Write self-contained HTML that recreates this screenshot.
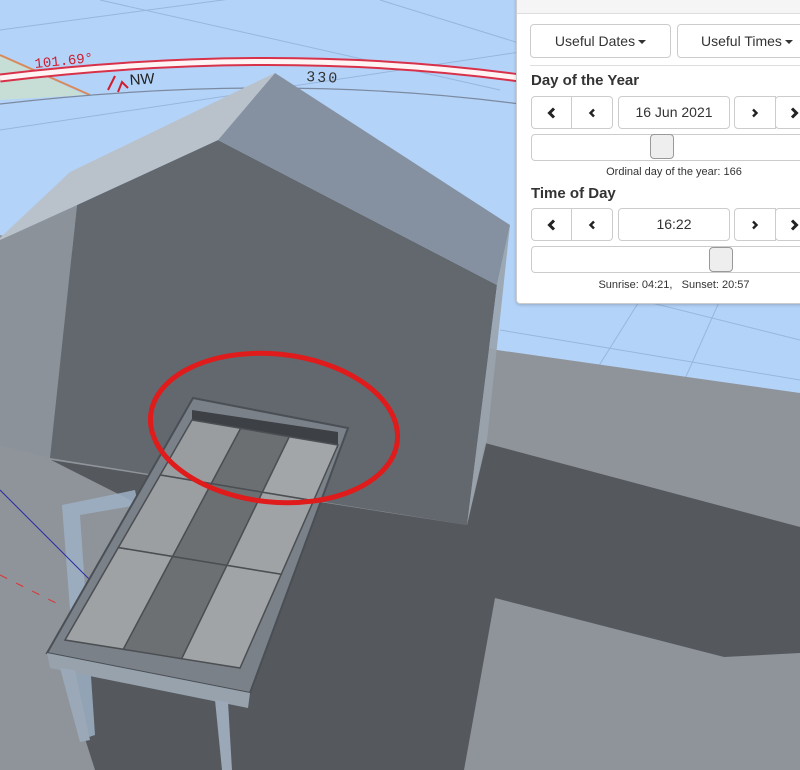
<!DOCTYPE html>
<html><head><meta charset="utf-8"><style>
body{margin:0;width:800px;height:770px;overflow:hidden;position:relative;font-family:"Liberation Sans",sans-serif;}
svg{position:absolute;left:0;top:0}
#p{position:absolute;left:516px;top:-20px;width:300px;height:322px;background:#fff;border:1px solid #ccc;border-radius:4px;box-shadow:0 1px 3px rgba(0,0,0,.2)}
#p .hd{height:33px;background:#f5f5f5;border-bottom:1px solid #ddd;font-size:12px;color:#333;padding:8px 14px 0;box-sizing:border-box;}
.b{position:absolute;border:1px solid #ccc;border-radius:4px;background:#fff;box-sizing:border-box;font-size:14px;color:#333;text-align:center;}
.b svg{position:static;vertical-align:middle}
.t{position:absolute;font-size:15px;font-weight:bold;color:#333}
.s{position:absolute;font-size:11px;color:#333;text-align:center;width:290px}
.car{display:inline-block;border-top:4px solid #333;border-left:4px solid transparent;border-right:4px solid transparent;vertical-align:middle;margin-left:3px}
.th{position:absolute;width:24px;height:25px;border:1px solid #999;border-radius:4px;background:#eee;box-sizing:border-box}
</style></head><body>
<svg width="800" height="770" viewBox="0 0 800 770">
<rect width="800" height="770" fill="#b4d3f8"/>
<g stroke="#8fb0d8" stroke-width="1" opacity=".8">
<line x1="0" y1="30" x2="520" y2="-40"/><line x1="0" y1="130" x2="800" y2="10"/><line x1="100" y1="0" x2="500" y2="90"/><line x1="380" y1="0" x2="800" y2="130"/><line x1="600" y1="290" x2="800" y2="340"/><line x1="500" y1="330" x2="800" y2="380"/><line x1="640" y1="300" x2="590" y2="380"/><line x1="720" y1="300" x2="680" y2="390"/>
</g>
<polygon points="0,100 85,95 0,55" fill="#cfe3c8" opacity=".7"/>
<line x1="0" y1="55" x2="90" y2="95" stroke="#d98a5a" stroke-width="2"/>
<path d="M0,78 Q275,45 520,78" stroke="#d8324a" stroke-width="9" fill="none"/>
<path d="M0,78 Q275,45 520,78" stroke="#fff4f4" stroke-width="5" fill="none"/>
<path d="M0,104 Q275,72 520,104" stroke="#7c8aa0" stroke-width="1.2" fill="none"/>
<text x="35" y="68" font-size="14" fill="#d01c2c" font-family="Liberation Mono" transform="rotate(-6 35 68)">101.69°</text>
<text x="130" y="85" font-size="15" fill="#222" font-family="Liberation Sans" transform="rotate(-4 130 85)">NW</text>
<text x="306" y="81" font-size="15" fill="#333" font-family="Liberation Mono" letter-spacing="2" transform="rotate(3 306 81)">330</text>
<path d="M108,90 L115,76 M118,92 L122,82 L128,88" stroke="#d01c2c" stroke-width="2" fill="none"/>
<!-- ground -->
<polygon points="0,235 497,350 800,393 800,770 0,770" fill="#8f949a"/>
<!-- house back/left -->
<polygon points="0,240 77,205 50,458 0,445" fill="#8b9299"/>
<polygon points="218,140 497,285 467,525 50,458 77,205" fill="#62686e"/>
<!-- shadow -->
<polygon points="51,460 467,525 485,443 800,527 800,653 724,657 495,598 464,770 95,770 60,660 140,505" fill="#55595e"/>
<polygon points="275,73 510,225 497,285 218,140" fill="#8591a0"/>
<polygon points="275,73 218,140 77,205 0,240 0,238 70,172" fill="#b9c1ca"/>
<polygon points="497,285 510,225 487,440 467,525" fill="#9aa3ad" opacity=".9"/>
<!-- left plate -->
<polygon points="62,505 135,490 138,505 80,515 95,735 80,740" fill="#9eb0c4" opacity=".85"/>
<line x1="0" y1="490" x2="90" y2="580" stroke="#2a2aa0" stroke-width="1"/>
<line x1="0" y1="575" x2="60" y2="605" stroke="#e03030" stroke-width="1" stroke-dasharray="8,10"/>
<!-- rack frame -->
<polygon points="193,398 348,428 250,693 47,653" fill="#7b8189" stroke="#4a4f55" stroke-width="2"/>
<polygon points="47,653 250,693 248,708 50,668" fill="#98a2ad"/>
<polygon points="60,668 75,670 90,740 80,742" fill="#9aa8b7"/>
<polygon points="215,700 228,702 232,770 222,770" fill="#9aa8b7"/>
<polygon points="192,410 338,432 338,448 192,422" fill="#3d4146"/>
<g stroke="#4b4e52" stroke-width="1.5">
<polygon points="192,420 240.7,428.3 211.3,483.6 160.25,475" fill="#9a9da0"/>
<polygon points="240.7,428.3 289.3,436.7 262.4,492.2 211.3,483.6" fill="#6c6f72"/>
<polygon points="289.3,436.7 338,445 313.5,500.75 262.4,492.2" fill="#a3a6a8"/>
<polygon points="160.25,475 211.3,483.6 172.6,556.5 118.3,547.6" fill="#9c9fa2"/>
<polygon points="211.3,483.6 262.4,492.2 226.9,565.4 172.6,556.5" fill="#6c6f72"/>
<polygon points="262.4,492.2 313.5,500.75 281.2,574.3 226.9,565.4" fill="#a0a3a5"/>
<polygon points="118.3,547.6 172.6,556.5 123.3,649.3 65,640" fill="#9fa2a4"/>
<polygon points="172.6,556.5 226.9,565.4 181.7,658.7 123.3,649.3" fill="#6d7073"/>
<polygon points="226.9,565.4 281.2,574.3 240,668 181.7,658.7" fill="#a1a4a6"/>
</g>
<ellipse cx="274" cy="428" rx="124" ry="74" transform="rotate(6 274 428)" fill="none" stroke="#e01b1b" stroke-width="5"/>
</svg>
<div id="p">
<div class="hd">DATE AND TIME</div>
</div>
<div class="b" style="left:530px;top:24px;width:141px;height:34px;line-height:32px">Useful Dates<span class="car"></span></div>
<div class="b" style="left:677px;top:24px;width:135px;height:34px;line-height:32px;text-align:left;padding-left:23px">Useful Times<span class="car"></span></div>
<div style="position:absolute;left:530px;top:65px;width:270px;border-top:1px solid #ddd"></div>
<div class="t" style="left:531px;top:72px">Day of the Year</div>
<div class="b" style="left:531px;top:96px;width:41px;height:33px;line-height:31px;border-radius:4px 0 0 4px"><svg width="10" height="12"><path d="M7,1.5 L2.5,6 L7,10.5" stroke="#222" stroke-width="3" fill="none"/></svg></div>
<div class="b" style="left:571px;top:96px;width:42px;height:33px;line-height:31px;border-radius:0 4px 4px 0"><svg width="8" height="10"><path d="M6,1.5 L2.5,5 L6,8.5" stroke="#222" stroke-width="2.4" fill="none"/></svg></div>
<div class="b" style="left:618px;top:96px;width:112px;height:33px;line-height:31px">16 Jun 2021</div>
<div class="b" style="left:734px;top:96px;width:42px;height:33px;line-height:31px;border-radius:4px 0 0 4px"><svg width="8" height="10"><path d="M2,1.5 L5.5,5 L2,8.5" stroke="#222" stroke-width="2.4" fill="none"/></svg></div>
<div class="b" style="left:775px;top:96px;width:40px;height:33px;line-height:31px;text-align:left;padding-left:13px"><svg width="10" height="12"><path d="M3,1.5 L7.5,6 L3,10.5" stroke="#222" stroke-width="3" fill="none"/></svg></div>
<div class="b" style="left:531px;top:134px;width:290px;height:27px"></div>
<div class="th" style="left:650px;top:134px"></div>
<div class="s" style="left:529px;top:166px">Ordinal day of the year: 166</div>
<div class="t" style="left:531px;top:185px">Time of Day</div>
<div class="b" style="left:531px;top:208px;width:41px;height:33px;line-height:31px;border-radius:4px 0 0 4px"><svg width="10" height="12"><path d="M7,1.5 L2.5,6 L7,10.5" stroke="#222" stroke-width="3" fill="none"/></svg></div>
<div class="b" style="left:571px;top:208px;width:42px;height:33px;line-height:31px;border-radius:0 4px 4px 0"><svg width="8" height="10"><path d="M6,1.5 L2.5,5 L6,8.5" stroke="#222" stroke-width="2.4" fill="none"/></svg></div>
<div class="b" style="left:618px;top:208px;width:112px;height:33px;line-height:31px">16:22</div>
<div class="b" style="left:734px;top:208px;width:42px;height:33px;line-height:31px;border-radius:4px 0 0 4px"><svg width="8" height="10"><path d="M2,1.5 L5.5,5 L2,8.5" stroke="#222" stroke-width="2.4" fill="none"/></svg></div>
<div class="b" style="left:775px;top:208px;width:40px;height:33px;line-height:31px;text-align:left;padding-left:13px"><svg width="10" height="12"><path d="M3,1.5 L7.5,6 L3,10.5" stroke="#222" stroke-width="3" fill="none"/></svg></div>
<div class="b" style="left:531px;top:246px;width:290px;height:27px"></div>
<div class="th" style="left:709px;top:247px"></div>
<div class="s" style="left:529px;top:279px">Sunrise: 04:21,&nbsp;&nbsp; Sunset: 20:57</div>
</body></html>
